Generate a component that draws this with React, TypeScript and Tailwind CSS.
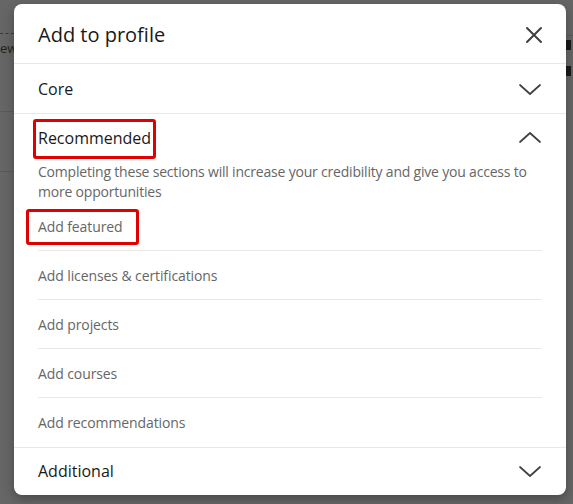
import React from "react";

const Chevron = ({ up }: { up?: boolean }) => (
    <svg width="24" height="24" viewBox="0 0 24 24" className="text-[#404040]">
        <path
            d={up ? "M2 16 L12 7 L22 16" : "M2 8 L12 17 L22 8"}
            fill="none"
            stroke="currentColor"
            strokeWidth="1.7"
            strokeLinecap="round"
            strokeLinejoin="round"
        />
    </svg>
);

const CloseIcon = () => (
    <svg width="24" height="24" viewBox="0 0 24 24" className="text-[#404040]">
        <path d="M5 5 L19 19 M19 5 L5 19" fill="none" stroke="currentColor" strokeWidth="2" strokeLinecap="round" />
    </svg>
);

const items = [
    "Add featured",
    "Add licenses & certifications",
    "Add projects",
    "Add courses",
    "Add recommendations",
];

const App = () => {
    return (
        <div
            className="relative w-[573px] h-[504px] overflow-hidden bg-[#666666]"
            style={{ fontFamily: '"Open Sans", "Noto Sans", sans-serif' }}
        >
            {/* dimmed page behind the dialog */}
            <div className="flex justify-between h-full">
                <div className="w-[14px] flex flex-col text-[#222] text-[13px]">
                    <div className="h-[34px] border-b border-dashed border-[#2a3a5a] w-[14px]" />
                    <div className="h-[28px] leading-[28px]">ew</div>
                    <div className="h-[50px] border-b border-[#5a5a5a]" />
                    <div className="h-[60px] border-b border-[#5a5a5a]" />
                </div>
                <div className="w-[7px] flex flex-col text-[12px] text-[#222]">
                    <div className="h-[36px] border-b border-[#5a5a5a]" />
                    <div className="w-[5px] h-[10px] bg-[#1a1a1a] mt-[4px]" />
                    <div className="w-[5px] h-[10px] bg-[#1a1a1a] mt-[16px]" />
                </div>
            </div>

            {/* dialog */}
            <div className="absolute left-[14px] top-[4px] w-[552px] rounded-lg bg-white overflow-hidden shadow-[0_4px_12px_rgba(0,0,0,0.3)]">
                <div className="h-[60px] border-b border-[#e8e8e8] flex items-center justify-between pl-6 pr-[20px] pt-[2px]">
                    <h2 className="text-[20px] text-[#191919] leading-[28px]">Add to profile</h2>
                    <CloseIcon />
                </div>

                <div className="h-[50px] border-b border-[#e8e8e8] flex items-center justify-between pl-6 pr-[24px]">
                    <span className="text-[16px] text-[#191919]">Core</span>
                    <Chevron />
                </div>

                <div className="border-b border-[#e8e8e8]">
                    <div className="relative h-[48px] flex items-center justify-between pl-6 pr-[24px]">
                        <span className="text-[16px] text-[#191919]">Recommended</span>
                        <Chevron up />
                        <div className="absolute left-[19px] top-[5px] w-[123px] h-[40px] border-[3px] border-[#e00000] rounded-[3px]" />
                    </div>
                    <p className="px-6 text-[14px] leading-[20px] text-[#666666] tracking-[-0.2px]">
                        Completing these sections will increase your credibility and give you access to more opportunities
                    </p>
                    <ul className="px-6">
                        {items.map((item, i) => (
                            <li
                                key={item}
                                className={
                                    "relative h-[49px] flex items-center text-[14px] text-[#666666] tracking-[-0.1px] " +
                                    (i < items.length - 1 ? "border-b border-[#e8e8e8]" : "")
                                }
                            >
                                {item}
                                {i === 0 && (
                                    <div className="absolute -left-[12px] top-[7px] w-[113px] h-[36px] border-[3px] border-[#e00000] rounded-[3px]" />
                                )}
                            </li>
                        ))}
                    </ul>
                </div>

                <div className="h-[48px] flex items-center justify-between pl-6 pr-[24px] -mt-[1px]">
                    <span className="text-[16px] text-[#191919]">Additional</span>
                    <Chevron />
                </div>
            </div>
        </div>
    );
};

export default App;
